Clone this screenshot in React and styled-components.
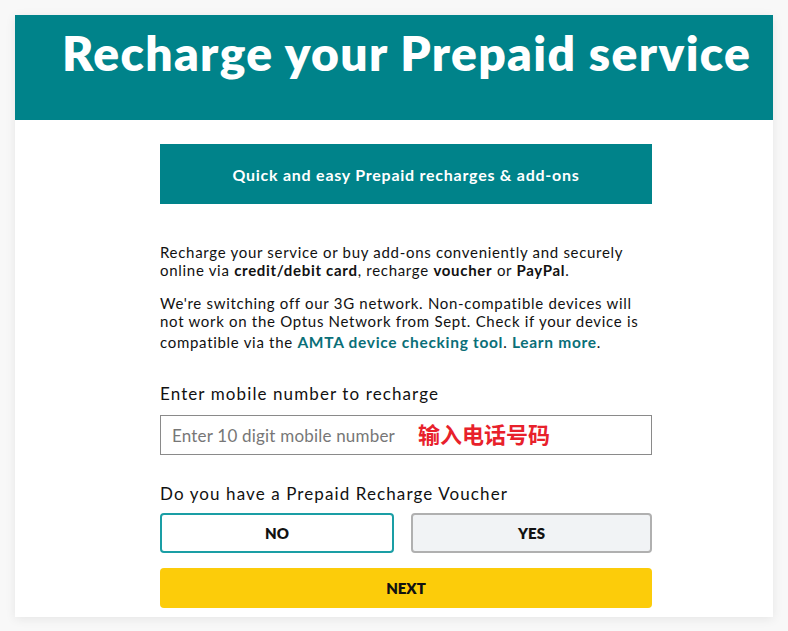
import React from "react";
import styled, { createGlobalStyle } from "styled-components";

const Global = createGlobalStyle`
  html, body { margin: 0; padding: 0; background: #f8f8f8; }
  body { font-family: Lato, "Noto Sans CJK SC", sans-serif; color: #111; }
  * { box-sizing: border-box; }
`;

const Page = styled.div`
  padding: 15px;
`;

const Card = styled.div`
  width: 758px;
  background: #fff;
  box-shadow: 0 2px 10px rgba(0, 0, 0, 0.08);
  padding-bottom: 9px;
`;

const Hero = styled.header`
  height: 105px;
  background: #00838a;
  padding: 14px 0 0 47px;
`;

const Title = styled.h1`
  margin: 0;
  font-family: Lato, sans-serif;
  font-weight: 800;
  font-size: 48px;
  line-height: 48px;
  color: #fff;
  letter-spacing: 1.35px;
`;

const Content = styled.main`
  width: 492px;
  margin: 24px 0 0 145px;
`;

const Banner = styled.div`
  height: 60px;
  background: #00838a;
  color: #fff;
  font-weight: 700;
  font-size: 16px;
  letter-spacing: 0.75px;
  display: flex;
  align-items: center;
  justify-content: center;
`;

const Para = styled.p`
  margin: ${(p) => p.$top || 0}px 0 0;
  font-size: 15px;
  letter-spacing: 0.7px;
  line-height: 18px;
  color: #111;
`;

const Link = styled.a`
  display: inline-block;
  color: #0a6f78;
  font-weight: 700;
  font-size: 15.5px;
  text-decoration: none;
  line-height: 24px;
  vertical-align: baseline;
`;

const Label = styled.div`
  margin-top: ${(p) => p.$top}px;
  font-size: 17px;
  letter-spacing: 1.1px;
  color: #111;
  line-height: 20px;
`;

const Field = styled.div`
  position: relative;
  margin-top: 11px;
  height: 40px;
  border: 1px solid #8a8a8a;
  display: flex;
  align-items: center;
  padding-left: 11px;
  font-size: 17px;
  letter-spacing: 0.2px;
  color: #777;
`;

const Note = styled.span`
  position: absolute;
  left: 257px;
  top: 1px;
  font-family: "Noto Sans CJK SC", sans-serif;
  font-weight: 700;
  font-size: 22px;
  letter-spacing: 0;
  color: #e8212b;
`;

const Choices = styled.div`
  display: grid;
  grid-template-columns: 234px 241px;
  gap: 17px;
  margin-top: 9px;
`;

const Choice = styled.button`
  height: 40px;
  border-radius: 4px;
  border: 2px solid ${(p) => (p.$active ? "#1a9ea5" : "#b0b0b0")};
  background: ${(p) => (p.$active ? "#fff" : "#f1f3f5")};
  font-family: Lato, sans-serif;
  font-weight: 800;
  font-size: 15px;
  color: #111;
`;

const Next = styled.button`
  display: block;
  width: 100%;
  margin-top: 15px;
  height: 40px;
  border: none;
  border-radius: 4px;
  background: #fccc0a;
  font-family: Lato, sans-serif;
  font-weight: 800;
  font-size: 15px;
  color: #111;
`;

export default function App() {
  return (
    <>
      <Global />
      <Page>
        <Card>
          <Hero>
            <Title>Recharge your Prepaid service</Title>
          </Hero>
          <Content>
            <Banner>Quick and easy Prepaid recharges &amp; add-ons</Banner>
            <Para $top={39}>
              Recharge your service or buy add-ons conveniently and securely online via{" "}
              <b>credit/debit card</b>, recharge <b>voucher</b> or <b>PayPal</b>.
            </Para>
            <Para $top={15}>
              We're switching off our 3G network. Non-compatible devices will not work on the
              Optus Network from Sept. Check if your device is compatible via the{" "}
              <Link href="#">AMTA device checking tool</Link>. <Link href="#">Learn more</Link>.
            </Para>
            <Label $top={30}>Enter mobile number to recharge</Label>
            <Field>
              Enter 10 digit mobile number
              <Note>输入电话号码</Note>
            </Field>
            <Label $top={29}>Do you have a Prepaid Recharge Voucher</Label>
            <Choices>
              <Choice $active>NO</Choice>
              <Choice>YES</Choice>
            </Choices>
            <Next>NEXT</Next>
          </Content>
        </Card>
      </Page>
    </>
  );
}
